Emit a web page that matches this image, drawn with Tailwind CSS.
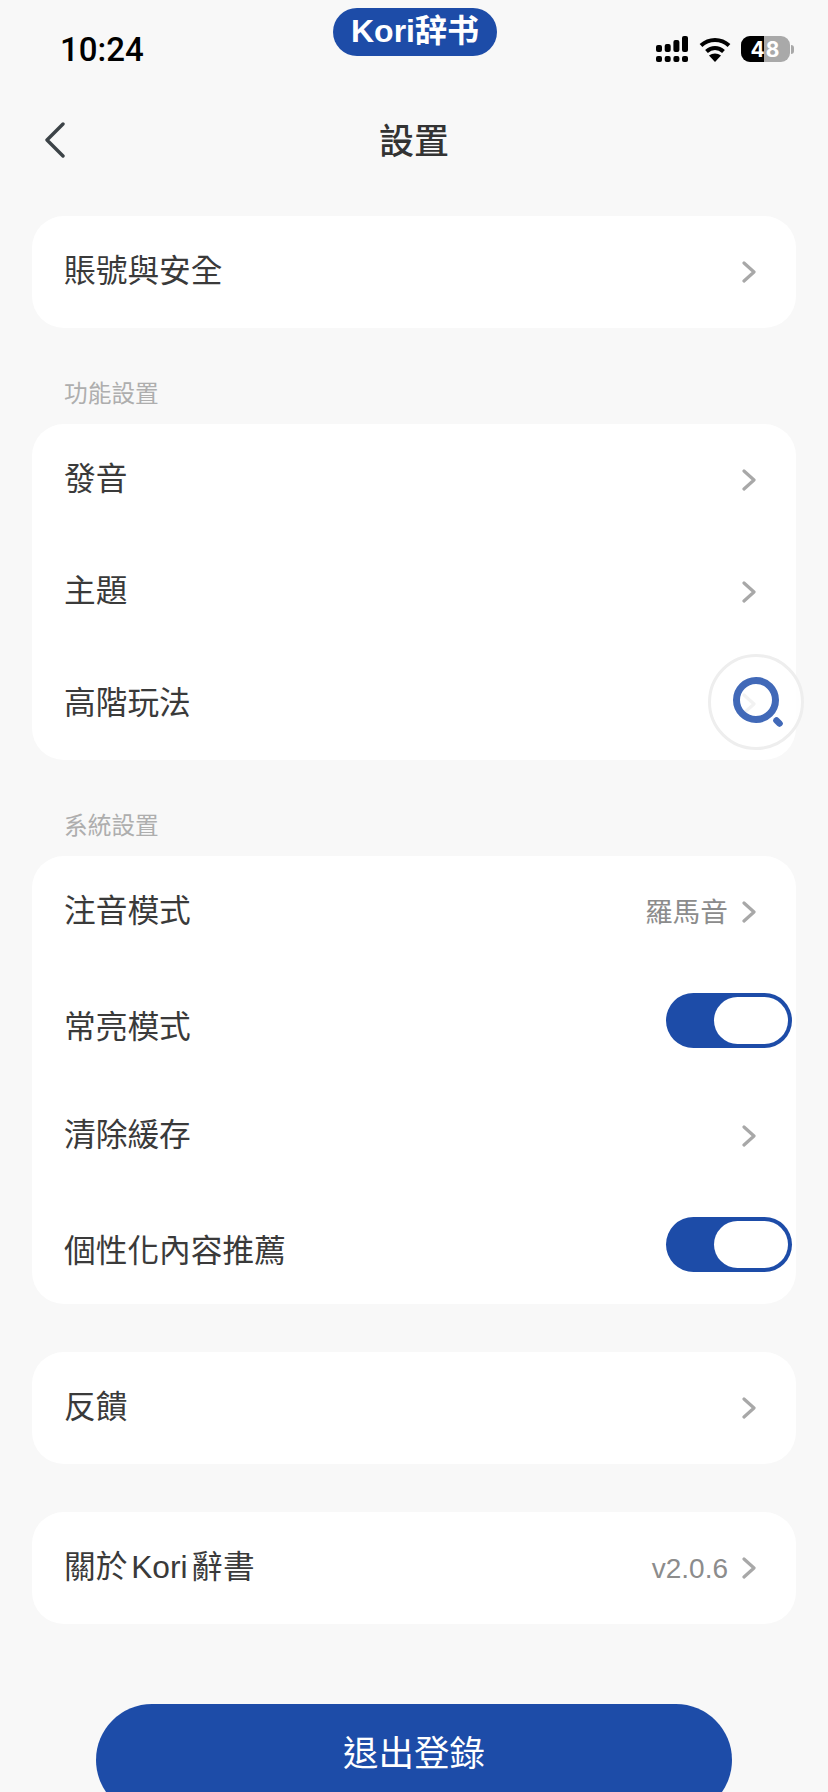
<!DOCTYPE html>
<html lang="zh-Hant">
<head>
<meta charset="utf-8">
<script src="https://cdn.jsdelivr.net/npm/@tailwindcss/browser@4"></script>
</head>
<body class="m-0">
<div class="relative w-[828px] h-[1792px] overflow-hidden bg-[#f8f8f8] text-[#3a3a3a] font-['Liberation_Sans','Noto_Sans_CJK_TC','Noto_Sans_CJK_SC',sans-serif]">

  <!-- status bar -->
  <div class="relative h-[88px] flex justify-between items-start">
    <div class="ml-[60px] mt-[29px] text-[33px] leading-[42px] font-medium text-black font-['Roboto',sans-serif]">10:24</div>
    <div class="absolute left-[333px] top-[8px] w-[164px] h-[48px] rounded-full bg-[#1d4ca8] text-white flex items-center justify-center text-[32px] font-bold leading-none">
      <span class="font-['Liberation_Sans','Noto_Sans_CJK_SC',sans-serif] mb-[2px]">Kori辞书</span>
    </div>
    <div class="flex items-center mt-[36px] mr-[34px]">
      <svg width="32" height="26" viewBox="0 0 32 26" class="block" fill="#000">
        <rect x="0" y="9" width="6" height="7" rx="2"/><rect x="8.7" y="8" width="6" height="8" rx="2"/><rect x="17.4" y="4" width="6" height="12" rx="2"/><rect x="26" y="0" width="6" height="16" rx="2"/>
        <rect x="0" y="20" width="6" height="6" rx="2"/><rect x="8.7" y="20" width="6" height="6" rx="2"/><rect x="17.4" y="20" width="6" height="6" rx="2"/><rect x="26" y="20" width="6" height="6" rx="2"/>
      </svg>
      <svg width="32" height="25" viewBox="0 0 32 25" class="block ml-[11px]" fill="none" stroke="#000" stroke-width="4">
        <path d="M2 8.5C10 1 22 1 30 8.5"/><path d="M7.5 14.5C12.5 9.8 19.5 9.8 24.5 14.5"/><path d="M16 25L10 18.5C13.5 15.7 18.5 15.7 22 18.5Z" fill="#000" stroke="none"/>
      </svg>
      <div class="relative ml-[10px] w-[49px] h-[26px] rounded-[9px] bg-[#a9a9a9]">
        <div class="w-[23px] h-full bg-black rounded-l-[9px]"></div>
        <div class="absolute inset-0 flex items-center justify-center text-white text-[21px] font-bold leading-none tracking-[1px] font-['Inter',sans-serif]">48</div>
      </div>
      <div class="w-[3px] h-[9px] ml-[1px] rounded-r-full bg-[#a9a9a9]"></div>
    </div>
  </div>

  <!-- nav -->
  <div class="relative h-[104px] flex items-center justify-center">
    <svg width="22" height="36" viewBox="0 0 22 36" class="absolute left-[44px] top-[34px]" fill="none" stroke="#3c4347" stroke-width="3.4" stroke-linecap="round" stroke-linejoin="round">
      <path d="M19 2L3 18L19 34"/>
    </svg>
    <div class="text-[35px] font-medium leading-none text-[#333333] mt-[3px]">設置</div>
  </div>

  <div class="px-[32px] pt-[24px]">
    <!-- card 1 -->
    <div class="bg-white rounded-[32px]">
      <div class="h-[112px] pl-[32px] pr-[40px] flex items-center justify-between">
        <span class="text-[31.7px] leading-none">賬號與安全</span>
        <svg width="14" height="22" viewBox="0 0 14 22" fill="none" stroke="#a8a8a8" stroke-width="3.2" stroke-linecap="round" stroke-linejoin="round"><path d="M2 2L12 11L2 20"/></svg>
      </div>
    </div>

    <div class="h-[96px] pl-[32px] flex items-center pt-[38px] text-[23.7px] leading-none text-[#aeaeae]">功能設置</div>

    <!-- card 2 -->
    <div class="bg-white rounded-[32px]">
      <div class="h-[112px] pl-[32px] pr-[40px] flex items-center justify-between">
        <span class="text-[31.7px] leading-none">發音</span>
        <svg width="14" height="22" viewBox="0 0 14 22" fill="none" stroke="#a8a8a8" stroke-width="3.2" stroke-linecap="round" stroke-linejoin="round"><path d="M2 2L12 11L2 20"/></svg>
      </div>
      <div class="h-[112px] pl-[32px] pr-[40px] flex items-center justify-between">
        <span class="text-[31.7px] leading-none">主題</span>
        <svg width="14" height="22" viewBox="0 0 14 22" fill="none" stroke="#a8a8a8" stroke-width="3.2" stroke-linecap="round" stroke-linejoin="round"><path d="M2 2L12 11L2 20"/></svg>
      </div>
      <div class="h-[112px] pl-[32px] pr-[40px] flex items-center justify-between">
        <span class="text-[31.7px] leading-none">高階玩法</span>
        <svg width="14" height="22" viewBox="0 0 14 22" fill="none" stroke="#a8a8a8" stroke-width="3.2" stroke-linecap="round" stroke-linejoin="round"><path d="M2 2L12 11L2 20"/></svg>
      </div>
    </div>

    <div class="h-[96px] pl-[32px] flex items-center pt-[38px] text-[23.7px] leading-none text-[#aeaeae]">系統設置</div>

    <!-- card 3 -->
    <div class="bg-white rounded-[32px]">
      <div class="h-[112px] pl-[32px] pr-[40px] flex items-center justify-between">
        <span class="text-[31.7px] leading-none">注音模式</span>
        <div class="flex items-center gap-[14px]">
          <span class="text-[27.7px] leading-none text-[#8c8c8c] mt-[2px]">羅馬音</span>
          <svg width="14" height="22" viewBox="0 0 14 22" fill="none" stroke="#a8a8a8" stroke-width="3.2" stroke-linecap="round" stroke-linejoin="round"><path d="M2 2L12 11L2 20"/></svg>
        </div>
      </div>
      <div class="h-[112px] pl-[32px] pr-[4px] flex items-center justify-between">
        <span class="text-[31.7px] leading-none mt-[8px]">常亮模式</span>
        <div class="w-[126px] h-[55px] mt-[-8px] rounded-full bg-[#1d4ca8] flex items-center justify-end pr-[4px]">
          <div class="w-[74px] h-[47px] rounded-full bg-white"></div>
        </div>
      </div>
      <div class="h-[112px] pl-[32px] pr-[40px] flex items-center justify-between">
        <span class="text-[31.7px] leading-none">清除緩存</span>
        <svg width="14" height="22" viewBox="0 0 14 22" fill="none" stroke="#a8a8a8" stroke-width="3.2" stroke-linecap="round" stroke-linejoin="round"><path d="M2 2L12 11L2 20"/></svg>
      </div>
      <div class="h-[112px] pl-[32px] pr-[4px] flex items-center justify-between">
        <span class="text-[31.7px] leading-none mt-[8px]">個性化內容推薦</span>
        <div class="w-[126px] h-[55px] mt-[-8px] rounded-full bg-[#1d4ca8] flex items-center justify-end pr-[4px]">
          <div class="w-[74px] h-[47px] rounded-full bg-white"></div>
        </div>
      </div>
    </div>

    <!-- card 4 -->
    <div class="mt-[48px] bg-white rounded-[32px]">
      <div class="h-[112px] pl-[32px] pr-[40px] flex items-center justify-between">
        <span class="text-[31.7px] leading-none">反饋</span>
        <svg width="14" height="22" viewBox="0 0 14 22" fill="none" stroke="#a8a8a8" stroke-width="3.2" stroke-linecap="round" stroke-linejoin="round"><path d="M2 2L12 11L2 20"/></svg>
      </div>
    </div>

    <!-- card 5 -->
    <div class="mt-[48px] bg-white rounded-[32px]">
      <div class="h-[112px] pl-[32px] pr-[40px] flex items-center justify-between">
        <span class="text-[31.7px] leading-none [word-spacing:-5px]">關於 Kori 辭書</span>
        <div class="flex items-center gap-[14px]">
          <span class="text-[28px] leading-none text-[#8c8c8c] mt-[2px]">v2.0.6</span>
          <svg width="14" height="22" viewBox="0 0 14 22" fill="none" stroke="#a8a8a8" stroke-width="3.2" stroke-linecap="round" stroke-linejoin="round"><path d="M2 2L12 11L2 20"/></svg>
        </div>
      </div>
    </div>

    <!-- logout -->
    <div class="mt-[80px] mx-[64px] h-[112px] rounded-full bg-[#1d4ca8] text-white flex items-center justify-center text-[35.5px] leading-none pb-[10px]">退出登錄</div>
  </div>

  <!-- floating search -->
  <div class="absolute left-[708px] top-[654px] w-[96px] h-[96px] rounded-full bg-white/85 border-[3px] border-[#eeeeee] flex items-center justify-center">
    <svg width="56" height="56" viewBox="0 0 56 56" fill="none" stroke="#4169b8">
      <circle cx="28" cy="26" r="19.5" stroke-width="7"/>
      <path d="M48.5 46.5L51.5 49.5" stroke-width="6.5" stroke-linecap="round"/>
    </svg>
  </div>
</div>
</body>
</html>
